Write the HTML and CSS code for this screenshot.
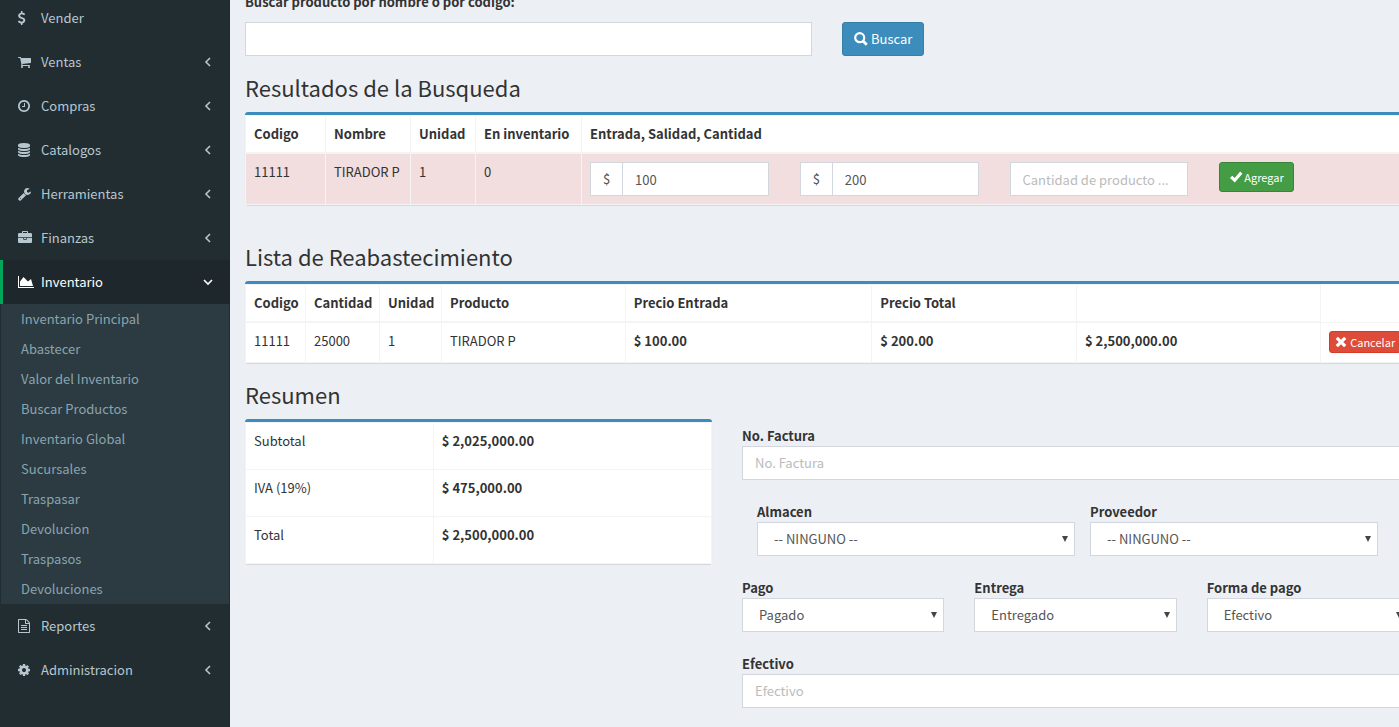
FILE: index.html
```html
<!DOCTYPE html>
<html lang="es">
<head>
<meta charset="utf-8">
<title>Reabastecer inventario</title>
<link rel="stylesheet" href="styles.css">
</head>
<body>
<div class="wrapper">
<nav class="sidebar">
<ul class="menu">
<li><a href="#"><svg class="icon" viewBox="430 0 1792 1792"><path d="M1362 1185q0 153-99.500 263.500t-258.500 136.500v175q0 14-9 23t-23 9h-135q-13 0-22.500-9.500t-9.500-22.500v-175q-66-9-127.500-31t-101.500-44.500-74-48-46.500-37.500-17.500-18q-17-21-2-41l103-135q7-10 23-12 15-2 24 9l2 2q113 99 243 125 37 8 74 8 81 0 142.500-43t61.500-122q0-28-15-53t-33.500-42-58.500-37.500-66-32-80-32.500q-39-16-61.500-25t-61.500-26.500-62.500-31-56.500-35.500-53.500-42.500-43.500-49-35.500-58-21-66.500-8.500-78q0-138 98-242t255-134v-180q0-13 9.500-22.500t22.500-9.500h135q14 0 23 9t9 23v176q57 6 110.500 23t87 33.500 63.500 37.500 39 29 15 14q17 18 5 38l-81 146q-8 15-23 16-14 3-27-7-3-3-14.500-12t-39-26.500-58.500-32-74.500-26-85.500-11.500q-95 0-155 43t-60 111q0 26 8.500 48t29.500 41.500 39.500 33 56 31 60.500 27 70 27.500q53 20 81 31.500t76 35 75.500 42.500 62 50 53 63.500 31.500 76.500 13 94z"/></svg><span>Vender</span></a></li>
<li><a href="#"><svg class="icon" viewBox="64 0 1792 1792"><path d="M704 1536q0 52-38 90t-90 38-90-38-38-90 38-90 90-38 90 38 38 90zm896 0q0 52-38 90t-90 38-90-38-38-90 38-90 90-38 90 38 38 90zm128-1088v512q0 24-16.500 42.500t-40.500 21.500l-1044 122q13 60 13 70 0 16-24 64h920q26 0 45 19t19 45-19 45-45 19h-1024q-26 0-45-19t-19-45q0-11 8-31.500t16-36 21.500-40 15.500-29.500l-177-823h-204q-26 0-45-19t-19-45 19-45 45-19h256q16 0 28.500 6.500t19.500 15.500 13 24.500 8 26 5.500 29.500 4.500 26h1201q26 0 45 19t19 45z"/></svg><span>Ventas</span><svg class="angle" viewBox="0 0 10 10"><path d="M7 1 3 5 7 9"/></svg></a></li>
<li><a href="#"><svg class="icon" viewBox="128 0 1792 1792"><path d="M1024 544v448q0 14-9 23t-23 9h-320q-14 0-23-9t-9-23v-64q0-14 9-23t23-9h224v-352q0-14 9-23t23-9h64q14 0 23 9t9 23zm416 352q0-148-73-273t-198-198-273-73-273 73-198 198-73 273 73 273 198 198 273 73 273-73 198-198 73-273zm224 0q0 209-103 385.500t-279.500 279.500-385.500 103-385.500-103-279.500-279.500-103-385.500 103-385.500 279.500-279.500 385.500-103 385.500 103 279.500 279.500 103 385.500z"/></svg><span>Compras</span><svg class="angle" viewBox="0 0 10 10"><path d="M7 1 3 5 7 9"/></svg></a></li>
<li><a href="#"><svg class="icon" viewBox="128 0 1792 1792"><path d="M896 768q237 0 443-43t325-127v170q0 69-103 128t-280 93.500-385 34.500-385-34.500-280-93.500-103-128v-170q119 84 325 127t443 43zm0 768q237 0 443-43t325-127v170q0 69-103 128t-280 93.500-385 34.500-385-34.500-280-93.500-103-128v-170q119 84 325 127t443 43zm0-384q237 0 443-43t325-127v170q0 69-103 128t-280 93.500-385 34.500-385-34.500-280-93.500-103-128v-170q119 84 325 127t443 43zm0-1152q208 0 385 34.500t280 93.500 103 128v128q0 69-103 128t-280 93.500-385 34.500-385-34.500-280-93.500-103-128v-128q0-69 103-128t280-93.500 385-34.500z"/></svg><span>Catalogos</span><svg class="angle" viewBox="0 0 10 10"><path d="M7 1 3 5 7 9"/></svg></a></li>
<li><a href="#"><svg class="icon" viewBox="64 0 1792 1792"><path d="M448 1472q0-26-19-45t-45-19-45 19-19 45 19 45 45 19 45-19 19-45zm644-420l-682 682q-37 37-90 37-52 0-91-37l-106-108q-38-36-38-90 0-53 38-91l681-681q39 98 114.500 173.500t173.500 114.500zm634-435q0 39-23 106-47 134-164.500 217.500t-258.500 83.500q-185 0-316.500-131.500t-131.500-316.500 131.500-316.500 316.500-131.500q58 0 121.500 16.500t107.500 46.500q16 11 16 28t-16 28l-293 169v224l193 107q5-3 79-48.500t135.500-81 70.500-35.500q15 0 23.500 10t8.500 25z"/></svg><span>Herramientas</span><svg class="angle" viewBox="0 0 10 10"><path d="M7 1 3 5 7 9"/></svg></a></li>
<li><a href="#"><svg class="icon" viewBox="0 0 1792 1792"><path d="M640 256h512v-128h-512v128zm1152 640v480q0 66-47 113t-113 47h-1472q-66 0-113-47t-47-113v-480h672v160q0 26 19 45t45 19h320q26 0 45-19t19-45v-160h672zm-768 0v128h-256v-128h256zm768-480v384h-1792v-384q0-66 47-113t113-47h352v-160q0-40 28-68t68-28h576q40 0 68 28t28 68v160h352q66 0 113 47t47 113z"/></svg><span>Finanzas</span><svg class="angle" viewBox="0 0 10 10"><path d="M7 1 3 5 7 9"/></svg></a></li>
<li class="active"><a href="#"><svg class="icon wide" viewBox="0 0 2048 1792"><path d="M2048 1536v128h-2048v-1536h128v1408h1920zm-384-1024l256 896h-1664v-576l448-576 576 576z"/></svg><span>Inventario</span><svg class="angle" viewBox="0 0 10 10"><path d="M1 3 5 7 9 3"/></svg></a>
<ul class="submenu">
<li><a href="#">Inventario Principal</a></li>
<li><a href="#">Abastecer</a></li>
<li><a href="#">Valor del Inventario</a></li>
<li><a href="#">Buscar Productos</a></li>
<li><a href="#">Inventario Global</a></li>
<li><a href="#">Sucursales</a></li>
<li><a href="#">Traspasar</a></li>
<li><a href="#">Devolucion</a></li>
<li><a href="#">Traspasos</a></li>
<li><a href="#">Devoluciones</a></li>
</ul></li>
<li><a href="#"><svg class="icon" viewBox="128 0 1792 1792"><path d="M1596 380q28 28 48 76t20 88v1152q0 40-28 68t-68 28h-1344q-40 0-68-28t-28-68v-1600q0-40 28-68t68-28h896q40 0 88 20t76 48zm-444-244v376h376q-10-29-22-41l-313-313q-12-12-41-22zm384 1528v-1024h-416q-40 0-68-28t-28-68v-416h-768v1536h1280zm-1024-864q0-14 9-23t23-9h704q14 0 23 9t9 23v64q0 14-9 23t-23 9h-704q-14 0-23-9t-9-23v-64zm736 224q14 0 23 9t9 23v64q0 14-9 23t-23 9h-704q-14 0-23-9t-9-23v-64q0-14 9-23t23-9h704zm0 256q14 0 23 9t9 23v64q0 14-9 23t-23 9h-704q-14 0-23-9t-9-23v-64q0-14 9-23t23-9h704z"/></svg><span>Reportes</span><svg class="angle" viewBox="0 0 10 10"><path d="M7 1 3 5 7 9"/></svg></a></li>
<li><a href="#"><svg class="icon" viewBox="128 0 1792 1792"><path d="M1152 896q0-106-75-181t-181-75-181 75-75 181 75 181 181 75 181-75 75-181zm512-109v222q0 12-8 23t-20 13l-185 28q-19 54-39 91 35 50 107 138 10 12 10 25t-9 23q-27 37-99 108t-94 71q-12 0-26-9l-138-108q-44 23-91 38-16 136-29 186-7 28-36 28h-222q-14 0-24.500-8.500t-11.500-21.500l-28-184q-49-16-90-37l-141 107q-10 9-25 9-14 0-25-11-126-114-165-168-7-10-7-23 0-12 8-23 15-21 51-66.500t54-70.500q-27-50-41-99l-183-27q-13-2-21-12.500t-8-23.500v-222q0-12 8-23t19-13l186-28q14-46 39-92-40-57-107-138-10-12-10-24 0-10 9-23 26-36 98.500-107.500t94.500-71.500q13 0 26 10l138 107q44-23 91-38 16-136 29-186 7-28 36-28h222q14 0 24.500 8.500t11.500 21.500l28 184q49 16 90 37l142-107q9-9 24-9 13 0 25 10 129 119 165 170 7 8 7 22 0 12-8 23-15 21-51 66.500t-54 70.500q26 50 41 98l183 28q13 2 21 12.500t8 23.500z"/></svg><span>Administracion</span><svg class="angle" viewBox="0 0 10 10"><path d="M7 1 3 5 7 9"/></svg></a></li>
</ul>
</nav>
<main class="content">
<form class="search">
<label for="producto">Buscar producto por nombre o por codigo:</label>
<div class="search-row">
<input class="control" id="producto" type="text">
<div><button class="btn primary" type="button"><svg class="glyph" viewBox="0 0 14 14"><circle cx="5.700" cy="5.700" r="4.500" fill="none" stroke="currentColor" stroke-width="2.200"/><path d="m9 9 3.800 3.800" stroke="currentColor" stroke-width="2.800"/></svg>Buscar</button></div>
</div>
</form>

<section class="results">
<h2>Resultados de la Busqueda</h2>
<div class="box">
<table class="table">
<colgroup><col class="c-80"><col class="c-85"><col class="c-65"><col class="c-106"><col></colgroup>
<thead><tr><th>Codigo</th><th>Nombre</th><th>Unidad</th><th>En inventario</th><th>Entrada, Salidad, Cantidad</th></tr></thead>
<tbody><tr class="danger"><td>11111</td><td>TIRADOR P</td><td>1</td><td>0</td>
<td><form class="add-row">
<div class="group"><span>$</span><input class="control" type="text" value="100" aria-label="Precio de entrada"></div>
<div class="group"><span>$</span><input class="control" type="text" value="200" aria-label="Precio de salida"></div>
<input class="control" type="text" placeholder="Cantidad de producto ..." aria-label="Cantidad">
<div><button class="btn success" type="button"><svg class="glyph" viewBox="0 0 14 14"><path d="m1 8 2.200-2.300 2.500 2.400L11.200 1.500 13.400 3.700 5.800 12.600z" fill="currentColor"/></svg>Agregar</button></div>
</form></td></tr></tbody>
</table>
</div>
</section>

<section class="list">
<h2>Lista de Reabastecimiento</h2>
<div class="box">
<table class="table">
<colgroup><col class="c-60"><col class="c-74"><col class="c-62"><col class="p-product"><col class="p-in"><col class="p-total"><col class="p-sum"><col></colgroup>
<thead><tr><th>Codigo</th><th>Cantidad</th><th>Unidad</th><th>Producto</th><th>Precio Entrada</th><th>Precio Total</th><th></th></tr></thead>
<tbody><tr><td>11111</td><td>25000</td><td>1</td><td>TIRADOR P</td><td><b>$ 100.00</b></td><td><b>$ 200.00</b></td><td><b>$ 2,500,000.00</b></td><td class="action"><button class="btn danger-btn" type="button"><svg class="glyph small" viewBox="0 0 12 12"><path d="m1.800 1.800 8.400 8.400m0-8.400-8.400 8.400" stroke="currentColor" stroke-width="3.200"/></svg>Cancelar</button></td></tr></tbody>
</table>
</div>
</section>

<section>
<h2>Resumen</h2>
<div class="columns">
<div class="box">
<table class="table totals">
<colgroup><col class="p-label"><col></colgroup>
<tbody>
<tr><td>Subtotal</td><td><b>$ 2,025,000.00</b></td></tr>
<tr><td>IVA (19%)</td><td><b>$ 475,000.00</b></td></tr>
<tr><td>Total</td><td><b>$ 2,500,000.00</b></td></tr>
</tbody>
</table>
</div>
<form class="checkout">
<div class="field"><label for="factura">No. Factura</label><input class="control" id="factura" type="text" placeholder="No. Factura"></div>
<div class="pair">
<div class="field"><label for="almacen">Almacen</label><span class="select"><select class="control" id="almacen"><option>-- NINGUNO --</option></select></span></div>
<div class="field"><label for="proveedor">Proveedor</label><span class="select"><select class="control" id="proveedor"><option>-- NINGUNO --</option></select></span></div>
</div>
<div class="triple">
<div class="field"><label for="pago">Pago</label><span class="select"><select class="control" id="pago"><option>Pagado</option></select></span></div>
<div class="field"><label for="entrega">Entrega</label><span class="select"><select class="control" id="entrega"><option>Entregado</option></select></span></div>
<div class="field"><label for="forma">Forma de pago</label><span class="select"><select class="control" id="forma"><option>Efectivo</option></select></span></div>
</div>
<div class="field"><label for="efectivo">Efectivo</label><input class="control" id="efectivo" type="text" placeholder="Efectivo"></div>
</form>
</div>
</section>
</main>
</div>
</body>
</html>
```
FILE: styles.css
```css
* { box-sizing: border-box; }

body {
  margin: 0;
  overflow: hidden;
  background: #ecf0f5;
  color: #333;
  font: 13px/20px "Noto Sans CJK JP", "Noto Sans", sans-serif;
}

ul { margin: 0; padding: 0; list-style: none; }
a { color: inherit; text-decoration: none; }

.wrapper { display: flex; height: 100vh; }

/* Sidebar */
.sidebar { flex: none; width: 230px; background: #222d32; color: #b8c7ce; }
.menu { margin-top: -4px; }
.menu > li > a {
  display: flex;
  align-items: center;
  height: 44px;
  padding: 0 17px 0 15px;
  border-left: 3px solid transparent;
}
.menu > li > a > span { flex: 1; }
.active > a { background: #1e282c; color: #fff; border-left-color: #00a65a !important; }
.icon { width: 14px; height: 14px; margin-right: 9px; fill: currentColor; }
.icon.wide { width: 16px; margin-right: 7px; }
.angle { width: 10px; height: 10px; fill: none; stroke: currentColor; stroke-width: 1.600; }
.submenu { margin: 0 1px; background: #2c3b41; color: #8aa4af; }
.submenu a { display: block; padding: 5px 5px 5px 20px; }

/* Content runs past the right edge of the window */
.content { flex: none; width: calc(100% - 205px); margin-top: -8px; padding: 0 15px; }
label, th, b { font-weight: 700; }
label { display: block; }
h2 { margin: 0 0 14px; font-size: 22px; line-height: 22px; font-weight: 400; }

.control {
  display: block;
  width: 100%;
  height: 34px;
  margin: 0;
  padding: 6px 12px;
  border: 1px solid #d2d6de;
  border-radius: 0;
  background: #fff;
  color: #555;
  font: inherit;
}
.control::placeholder { color: #bbb; opacity: 1; }
select.control { padding-left: 16px; appearance: none; }
.select { display: block; position: relative; }
.select::after {
  content: "";
  position: absolute;
  top: 14px;
  right: 7px;
  border: solid transparent;
  border-width: 6px 3px 0;
  border-top-color: #444;
}

.btn {
  display: inline-flex;
  align-items: center;
  gap: 3px;
  border: 1px solid;
  border-radius: 3px;
  color: #fff;
  font: inherit;
  white-space: nowrap;
}
.glyph { flex: none; width: 14px; height: 14px; }
.glyph.small { width: 12px; height: 12px; }
.primary { height: 34px; padding: 0 11px; background: #3c8dbc; border-color: #367fa9; }
.success { height: 30px; padding: 0 9px; gap: 1px; background: #449d44; border-color: #398439; font-size: 11px; }
.danger-btn { height: 22px; padding: 0 5px; background: #dd4b39; border-color: #d73925; font-size: 11px; }

.search { margin-bottom: 20px; }
.search-row { display: grid; grid-template-columns: 1fr 1fr; gap: 30px; margin-top: 10px; }
.results { margin-bottom: 40px; }
.list { margin-bottom: 20px; }

.box {
  border-top: 3px solid #3c8dbc;
  border-radius: 3px;
  background: #fff;
  box-shadow: 0 1px 1px rgba(0, 0, 0, .1);
}

.table { width: 100%; table-layout: fixed; border-collapse: collapse; }
.table th, .table td { padding: 8px; border: 1px solid #f4f4f4; text-align: left; vertical-align: top; }
.table th { border-bottom-width: 2px; }
.danger td { background: #f2dede; }
.table.totals td { height: 47px; }
.c-60 { width: 60px; }
.c-62 { width: 62px; }
.c-65 { width: 65px; }
.c-74 { width: 74px; }
.c-80 { width: 80px; }
.c-85 { width: 85px; }
.c-106 { width: 106px; }
.p-product { width: 15.800%; }
.p-in { width: 21.200%; }
.p-total { width: 17.600%; }
.p-sum { width: 21%; }
.p-label { width: 40.300%; }

.add-row { display: grid; grid-template-columns: repeat(4, 1fr); column-gap: 31px; margin: 0; padding-right: 2px; }
.group { display: flex; }
.group span {
  flex: none;
  width: 32px;
  border: 1px solid #d2d6de;
  border-right: 0;
  background: #fff;
  color: #555;
  line-height: 32px;
  text-align: center;
}
.group .control { min-width: 0; }
.table .action { height: 40px; white-space: nowrap; }
.action .btn { vertical-align: top; }

.columns { display: grid; grid-template-columns: 467fr 667fr; column-gap: 30px; align-items: start; }
.checkout { display: grid; row-gap: 22px; padding-top: 7px; }
.pair { display: grid; grid-template-columns: 318fr 288fr; column-gap: 15px; padding: 0 31px 0 15px; }
.triple { display: grid; grid-template-columns: repeat(3, 1fr); column-gap: 30px; }
```
